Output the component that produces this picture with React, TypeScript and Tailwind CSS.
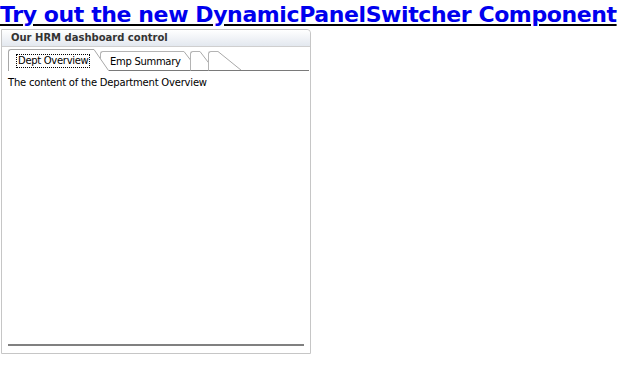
function Slant({ w, h, bottom }: { w: number; h: number; bottom: boolean }) {
  return (
    <svg width={w} height={h} className="block shrink-0">
      <polygon points={`0,0 ${w},${h} 0,${h}`} fill="#ffffff" />
      <line x1="0" y1="0.5" x2={w - 0.5} y2={h - 0.5} stroke="#a8a8a8" strokeWidth="1" />
      {bottom && <line x1="0" y1={h - 0.5} x2={w} y2={h - 0.5} stroke="#7a7a7a" strokeWidth="1" />}
    </svg>
  );
}

export default function App() {
  const tabs = [
    { label: "Emp Summary", width: "w-[84px]", ml: "-ml-[9px]", slant: 15, z: "z-[2]" },
    { label: "", width: "w-[9px]", ml: "-ml-[9px]", slant: 15, z: "z-[3]" },
    { label: "", width: "w-[6px]", ml: "-ml-[7px]", slant: 24, z: "z-[4]" },
  ];

  return (
    <div className="bg-white min-h-[366px] font-['DejaVu_Sans',sans-serif] text-black">
      <a
        href="#"
        className="block w-max text-[22px] leading-[29px] font-bold text-[#0000ee] underline decoration-black tracking-[-0.4px]"
      >
        Try out the new DynamicPanelSwitcher Component
      </a>

      <div className="ml-[1px] w-[310px] h-[325px] border border-[#c6c6c6] rounded-tr-[4px] flex flex-col">
        <div className="h-[17px] border-b border-[#cfcfcf] bg-gradient-to-b from-white to-[#e3e8ef] rounded-tr-[4px] px-[9px] text-[10px] leading-[16px] font-bold text-[#333333]">
          Our HRM dashboard control
        </div>

        <div className="flex items-end h-[24px] px-[6px] pr-[1px]">
          <div className="relative z-10 flex h-[22px]">
            <div className="w-[86px] h-[22px] bg-white border-l border-t border-[#a8a8a8] rounded-tl-[3px] pl-[8px] pt-[5px]">
              <span className="outline-1 outline-dotted outline-black px-[1px] text-[10px] leading-[12px] tracking-[-0.3px] block w-max">
                Dept Overview
              </span>
            </div>
            <Slant w={15} h={22} bottom={false} />
          </div>

          {tabs.map((t, i) => (
            <div key={i} className={`relative flex h-[20px] ${t.ml} ${t.z}`}>
              <div
                className={`${t.width} h-[20px] bg-white border-l border-t border-b border-t-[#b4b4b4] border-l-[#b4b4b4] border-b-[#7a7a7a] rounded-tl-[3px] pl-[9px] pt-[1px] text-[10px] leading-[18px] tracking-[-0.3px] whitespace-nowrap`}
              >
                {t.label}
              </div>
              <Slant w={t.slant} h={20} bottom={true} />
            </div>
          ))}

          <div className="flex-1 h-[1px] bg-[#7a7a7a]" />
        </div>

        <div className="flex-1 px-[6px] pt-[5px] text-[10px] leading-[13px] tracking-[-0.2px]">
          The content of the Department Overview
        </div>

        <div className="mx-[6px] mb-[7px] border-t-2 border-[#808080]" />
      </div>
    </div>
  );
}
